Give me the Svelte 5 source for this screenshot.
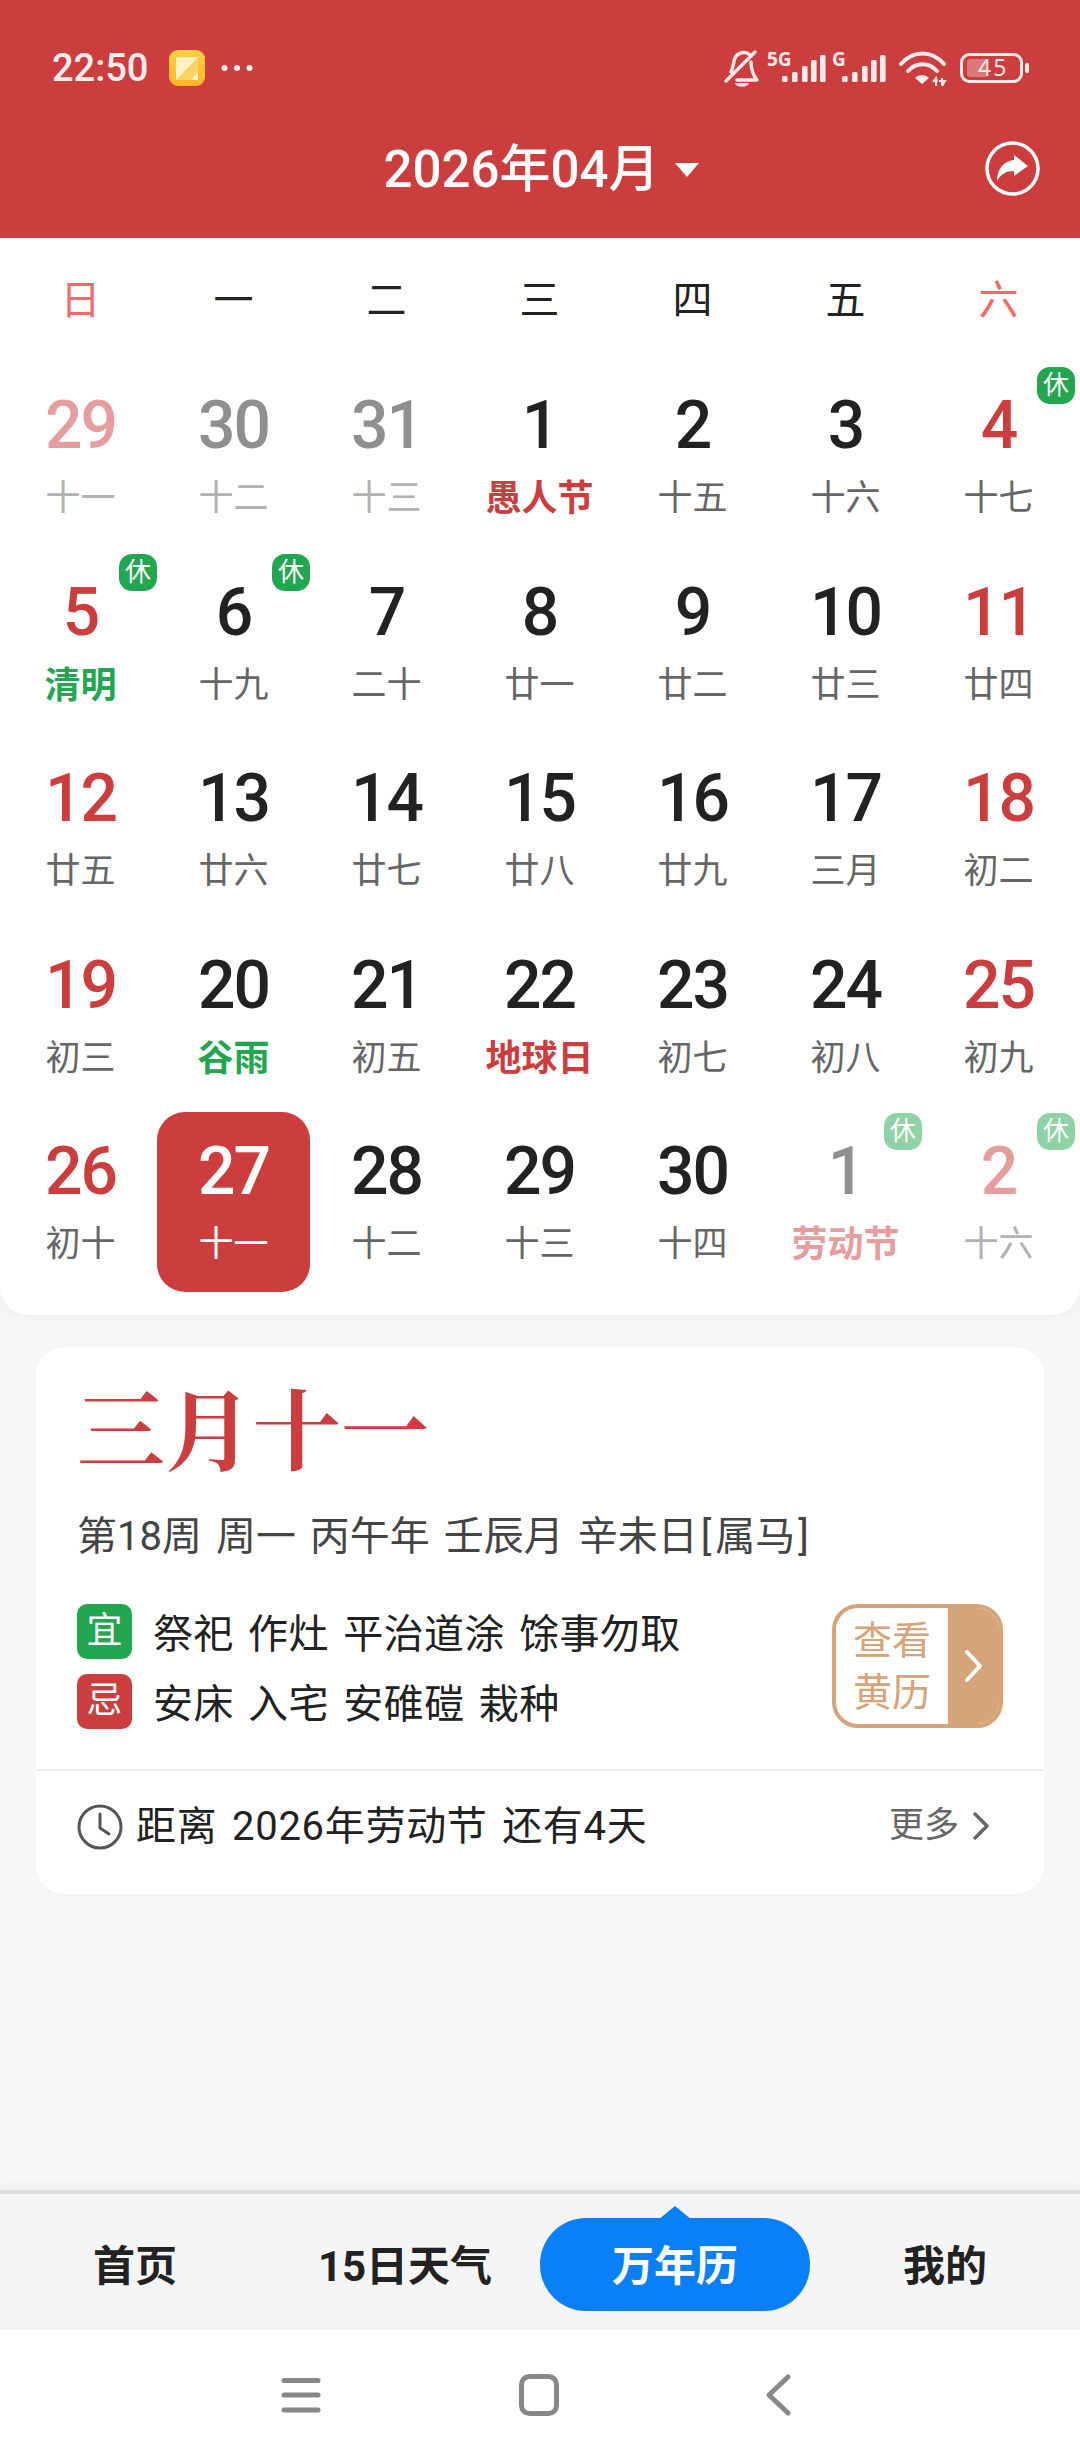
<script>
  const weekdays = [['日', true], ['一'], ['二'], ['三'], ['四'], ['五'], ['六', true]];
  const days = [
    { n: 29, l: '十一', red: 1, other: 1 }, { n: 30, l: '十二', other: 1 }, { n: 31, l: '十三', other: 1 },
    { n: 1, l: '愚人节', fest: 'r' }, { n: 2, l: '十五' }, { n: 3, l: '十六' }, { n: 4, l: '十七', red: 1, rest: 1 },
    { n: 5, l: '清明', red: 1, rest: 1, fest: 'g' }, { n: 6, l: '十九', rest: 1 }, { n: 7, l: '二十' }, { n: 8, l: '廿一' },
    { n: 9, l: '廿二' }, { n: 10, l: '廿三' }, { n: 11, l: '廿四', red: 1 },
    { n: 12, l: '廿五', red: 1 }, { n: 13, l: '廿六' }, { n: 14, l: '廿七' }, { n: 15, l: '廿八' },
    { n: 16, l: '廿九' }, { n: 17, l: '三月' }, { n: 18, l: '初二', red: 1 },
    { n: 19, l: '初三', red: 1 }, { n: 20, l: '谷雨', fest: 'g' }, { n: 21, l: '初五' }, { n: 22, l: '地球日', fest: 'r' },
    { n: 23, l: '初七' }, { n: 24, l: '初八' }, { n: 25, l: '初九', red: 1 },
    { n: 26, l: '初十', red: 1 }, { n: 27, l: '十一', today: 1 }, { n: 28, l: '十二' }, { n: 29, l: '十三' },
    { n: 30, l: '十四' }, { n: 1, l: '劳动节', other: 1, rest: 1, fest: 'r' }, { n: 2, l: '十六', red: 1, other: 1, rest: 1 }
  ];
  const tabs = ['首页', '15日天气', '万年历', '我的'];
  const bars = [[0, 76], [10, 72], [20, 66], [29, 60], [38, 55]];
</script>

<div class="page">
  <header class="head">
    <div class="status">
      <div class="status-left">
        <span class="time">22:50</span>
        <svg class="appicon" viewBox="0 0 36 36" width="36" height="36">
          <defs>
            <linearGradient id="ag" x1="0" y1="0" x2="0" y2="1">
              <stop offset="0" stop-color="#ffd23e" />
              <stop offset="1" stop-color="#fdb42a" />
            </linearGradient>
          </defs>
          <rect width="36" height="36" rx="9" fill="url(#ag)" />
          <rect x="7" y="7" width="22" height="23" fill="#fff2c4" />
          <path d="M7 30 L29 7 V22 L22 30 Z" fill="#fbd468" />
        </svg>
        <svg class="dots" viewBox="0 0 32 8" width="32" height="8">
          <circle cx="3.5" cy="4" r="3" fill="#fdeeee" /><circle cx="16" cy="4" r="3" fill="#fdeeee" /><circle cx="28.5" cy="4" r="3" fill="#fdeeee" />
        </svg>
      </div>
      <svg class="sys" viewBox="724 40 305 50" width="305" height="50">
        <g fill="none" stroke="#fde9e9" stroke-width="3.4" stroke-linecap="round" stroke-linejoin="round">
          <path d="M726 81 L755 52" />
          <path d="M731 72 C734 66 733 62 735 58 C738 52 746 51 750 55 M751 62 C751 69 753 75 757 80 H737" />
        </g>
        <path d="M735 83 H749 C748 88 736 88 735 83 Z" fill="#fde9e9" />
        <text class="net" x="767" y="66">5G</text>
        <text class="net" x="832" y="66">G</text>
        {#each [782, 842] as ox}
          {#each bars as b}
            <rect x={ox + b[0]} y={b[1]} width="5.6" height={82 - b[1]} rx="1.5" fill="#fde9e9" />
          {/each}
        {/each}
        <g fill="none" stroke="#fde9e9" stroke-width="4" stroke-linecap="round">
          <path d="M901 64 C913 50 932 50 944 64" />
          <path d="M908 71 C916 62 929 62 937 71" />
        </g>
        <path d="M915 78 C919 74 925 74 929 78 L922 84 Z" fill="#fde9e9" />
        <path d="M936 86 V79 M933 82 L936 78 L937 82 M942 78 V85 M939 81 H945 L942 86" stroke="#fde9e9" stroke-width="2" fill="none" />
        <rect x="961.5" y="54.5" width="60" height="27" rx="8" fill="none" stroke="#fde9e9" stroke-width="3" />
        <rect x="967" y="59" width="21" height="18" rx="3" fill="#fde9e9" fill-opacity=".35" />
        <rect x="1025" y="63" width="4" height="10" rx="2" fill="#fde9e9" />
        <text class="batt" x="978" y="76">45</text>
      </svg>
    </div>
    <div class="titlebar">
      <div class="title">2026年04月<span class="caret"></span></div>
      <svg class="share" viewBox="985 141 55 55" width="55" height="55">
        <circle cx="1012.5" cy="168.5" r="25.5" fill="none" stroke="#fff" stroke-width="3.5" />
        <path d="M1014 155 L1028 166 L1014 176 V171 C1006 171 1001 174 997 181 C997 170 1003 161 1014 160 Z" fill="#fff" />
      </svg>
    </div>
  </header>

  <section class="calendar">
    <div class="weeks">
      {#each weekdays as w}
        <span class:wred={w[1]}>{w[0]}</span>
      {/each}
    </div>
    <div class="grid">
      {#each days as d}
        <div class="cell" class:today={d.today} class:other={d.other}>
          <span class="num" class:red={d.red}>{d.n}</span>
          <span class="lunar" class:fr={d.fest === 'r'} class:fg={d.fest === 'g'}>{d.l}</span>
          {#if d.rest}<span class="rest">休</span>{/if}
        </div>
      {/each}
    </div>
  </section>

  <section class="info">
    <div class="info-top">
      <div class="big">三月十一</div>
      <div class="sub">第18周 周一 丙午年 壬辰月 辛未日<span class="br">[</span>属马<span class="br">]</span></div>
      <div class="yiji">
        <div class="lines">
          <div class="line"><span class="tag yi">宜</span><span class="txt">祭祀 作灶 平治道涂 馀事勿取</span></div>
          <div class="line"><span class="tag ji">忌</span><span class="txt">安床 入宅 安碓磑 栽种</span></div>
        </div>
        <div class="almanac">
          <div class="al-text">查看<br />黄历</div>
          <div class="al-arrow">
            <svg viewBox="0 0 20 34" width="20" height="34"><path d="M3 3 L16 17 L3 31" fill="none" stroke="#fff" stroke-width="4" stroke-linecap="round" stroke-linejoin="round" /></svg>
          </div>
        </div>
      </div>
    </div>
    <div class="foot">
      <svg class="clock" viewBox="0 0 46 46" width="46" height="46">
        <circle cx="23" cy="23" r="21" fill="none" stroke="#555" stroke-width="3" />
        <path d="M23 10 V24 L32 30" fill="none" stroke="#555" stroke-width="3" stroke-linecap="round" stroke-linejoin="round" />
      </svg>
      <span class="count">距离 2026年劳动节 还有4天</span>
      <span class="more">更多</span>
      <svg class="morearrow" viewBox="0 0 18 28" width="18" height="28"><path d="M3 2 L15 14 L3 26" fill="none" stroke="#666" stroke-width="3.4" stroke-linecap="round" stroke-linejoin="round" /></svg>
    </div>
  </section>

  <div class="spacer"></div>

  <nav class="tabs">
    {#each tabs as t, i}
      <div class="tab" class:active={i === 2}><span>{t}</span></div>
    {/each}
  </nav>

  <div class="sysnav">
    <svg viewBox="0 0 40 36" width="40" height="36"><path d="M3 3.5 H37 M3 18 H37 M3 33 H37" stroke="#888" stroke-width="5" stroke-linecap="round" /></svg>
    <svg class="home" viewBox="0 0 40 42" width="40" height="42"><rect x="2.5" y="2.5" width="35" height="37" rx="8" fill="none" stroke="#888" stroke-width="5" /></svg>
    <svg viewBox="0 0 26 42" width="26" height="42"><path d="M23 3 L4 21 L23 39" fill="none" stroke="#888" stroke-width="5" stroke-linecap="round" stroke-linejoin="round" /></svg>
  </div>
</div>

<style>
  :global(body) {
    margin: 0;
    background: #f7f7f7;
  }
  .page {
    width: 1080px;
    height: 2460px;
    display: flex;
    flex-direction: column;
    overflow: hidden;
    font-family: Roboto, "Noto Sans CJK SC", sans-serif;
    color: #222;
  }
  .head {
    height: 238px;
    background: #cc3d3d;
    display: flex;
    flex-direction: column;
    flex: none;
  }
  .status {
    display: flex;
    justify-content: space-between;
    align-items: flex-start;
    padding: 40px 51px 0 52px;
    height: 50px;
  }
  .status-left {
    display: flex;
    align-items: center;
    height: 36px;
    margin-top: 10px;
  }
  .time {
    font-size: 38px;
    line-height: 36px;
    width: 117px;
    color: #fdeeee;
    font-weight: 500;
  }
  .dots {
    margin-left: 16px;
  }
  .net {
    font: 700 19px "Noto Sans", sans-serif;
    fill: #fde9e9;
  }
  .batt {
    font: 400 23px "Noto Sans", sans-serif;
    fill: #fde9e9;
    letter-spacing: 2px;
  }
  .titlebar {
    position: relative;
    display: flex;
    justify-content: center;
    margin-top: 50px;
    height: 60px;
  }
  .title {
    display: flex;
    align-items: center;
    margin-left: 3px;
    font-size: 51px;
    line-height: 60px;
    font-weight: 500;
    color: #fff;
  }
  .caret {
    margin-left: 16px;
    width: 0;
    height: 0;
    border-left: 12px solid transparent;
    border-right: 12px solid transparent;
    border-top: 14px solid #fff;
  }
  .share {
    position: absolute;
    left: 985px;
    top: 1px;
  }
  .calendar {
    flex: none;
    background: #fff;
    height: 1077px;
    border-radius: 0 0 28px 28px;
    box-shadow: 0 4px 12px rgba(0, 0, 0, 0.03);
    padding: 0 4px;
    box-sizing: border-box;
  }
  .weeks {
    display: grid;
    grid-template-columns: repeat(7, 153px);
    height: 128px;
    line-height: 126px;
    text-align: center;
    font-size: 40px;
    color: #222;
  }
  .wred {
    color: #f06a6a;
  }
  .grid {
    display: grid;
    grid-template-columns: repeat(7, 153px);
    grid-auto-rows: 180px;
    row-gap: 6.5px;
  }
  .cell {
    position: relative;
    display: flex;
    flex-direction: column;
    align-items: center;
    border-radius: 28px;
  }
  .other {
    opacity: 0.5;
  }
  .today {
    background: #cc3d3d;
    color: #fff;
  }
  .num {
    margin-top: 30px;
    font-size: 66px;
    line-height: 60px;
    font-weight: 500;
    letter-spacing: -2px;
  }
  .red {
    color: #cc3d3d;
  }
  .lunar {
    margin-top: 23px;
    font-size: 35px;
    line-height: 40px;
    color: #666;
  }
  .today .lunar {
    color: #fff;
  }
  .fr {
    color: #cc3d3d;
    font-weight: 700;
    font-size: 36px;
  }
  .fg {
    color: #22a650;
    font-weight: 700;
    font-size: 36px;
  }
  .rest {
    position: absolute;
    right: 0;
    top: 1px;
    width: 38px;
    height: 37px;
    border-radius: 13px;
    background: #22a650;
    color: #fff;
    font-size: 26px;
    line-height: 37px;
    text-align: center;
  }
  .info {
    flex: none;
    margin: 32px 36px 0;
    height: 547px;
    background: #fff;
    border-radius: 28px;
    box-shadow: 0 2px 10px rgba(0, 0, 0, 0.02);
    display: flex;
    flex-direction: column;
  }
  .info-top {
    height: 424px;
    box-sizing: border-box;
    padding: 28px 41px 0 41px;
    border-bottom: 2px solid #ececec;
  }
  .big {
    font-family: "Noto Serif CJK SC", "Source Han Serif SC", "Liberation Serif", serif;
    font-size: 88px;
    line-height: 100px;
    font-weight: 700;
    color: #cc3d3d;
  }
  .sub {
    margin-top: 37px;
    font-size: 40px;
    line-height: 50px;
    word-spacing: 4px;
    color: #444;
  }
  .br {
    margin: 0 4px 0 3px;
  }
  .yiji {
    display: flex;
    justify-content: space-between;
    margin-top: 42px;
  }
  .lines {
    display: flex;
    flex-direction: column;
    gap: 15px;
  }
  .line {
    display: flex;
    align-items: center;
    gap: 21px;
    height: 55px;
  }
  .tag {
    width: 55px;
    height: 55px;
    border-radius: 10px;
    color: #fff;
    font-size: 36px;
    line-height: 55px;
    text-align: center;
  }
  .yi {
    background: #22a650;
  }
  .ji {
    background: #cc3d3d;
  }
  .txt {
    font-size: 40px;
    letter-spacing: 0.4px;
    word-spacing: 4px;
    margin-top: -2px;
    color: #222;
  }
  .almanac {
    display: flex;
    width: 171px;
    height: 124px;
    box-sizing: border-box;
    border: 4px solid #d5a479;
    border-radius: 26px;
    overflow: hidden;
  }
  .al-text {
    flex: 1;
    padding: 7px 0 0 17px;
    font-size: 39px;
    line-height: 52px;
    color: #d5a479;
  }
  .al-arrow {
    width: 51px;
    background: #d5a479;
    display: flex;
    align-items: center;
    justify-content: center;
  }
  .foot {
    display: flex;
    align-items: center;
    height: 50px;
    padding: 31px 54px 0 41px;
  }
  .clock {
    margin-right: 13px;
    flex: none;
  }
  .count {
    flex: 1;
    font-size: 40px;
    line-height: 50px;
    letter-spacing: 0.7px;
    word-spacing: 4px;
    color: #222;
  }
  .more {
    font-size: 35px;
    line-height: 44px;
    margin-bottom: 2px;
    color: #666;
  }
  .morearrow {
    margin-left: 13px;
    margin-bottom: 2px;
  }
  .spacer {
    flex: 1;
  }
  .tabs {
    flex: none;
    height: 140px;
    background: #f5f5f5;
    border-top: 4px solid #dedede;
    box-shadow: 0 -6px 8px rgba(0, 0, 0, 0.03);
    box-sizing: border-box;
    display: grid;
    grid-template-columns: repeat(4, 270px);
  }
  .tab {
    position: relative;
    display: flex;
    align-items: center;
    justify-content: center;
    font-size: 42px;
    font-weight: 700;
    height: 128px;
    padding-top: 8px;
    box-sizing: border-box;
    color: #222;
  }
  .active {
    color: #fff;
    z-index: 0;
  }
  .active::before {
    content: "";
    position: absolute;
    z-index: -1;
    left: 0;
    right: 0;
    top: 24px;
    height: 93px;
    border-radius: 46px;
    background: #0a7ffa;
  }
  .active::after {
    content: "";
    position: absolute;
    z-index: -1;
    left: 118px;
    top: 12px;
    width: 0;
    height: 0;
    border-left: 17px solid transparent;
    border-right: 17px solid transparent;
    border-bottom: 14px solid #0a7ffa;
  }
  .sysnav {
    flex: none;
    height: 130px;
    background: #fff;
    display: flex;
    align-items: center;
    padding: 0 289px 0 281px;
    justify-content: space-between;
  }
  .home {
    margin-right: 8px;
  }
</style>
